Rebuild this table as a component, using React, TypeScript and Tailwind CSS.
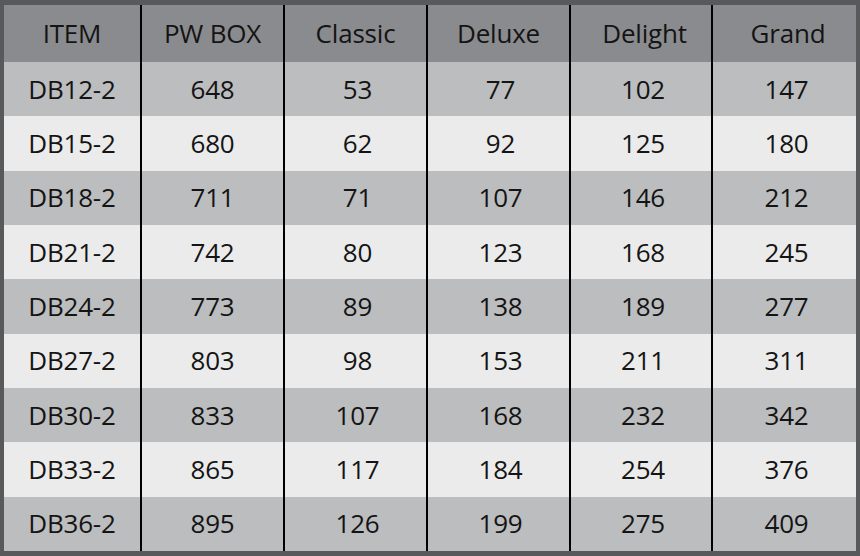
const headers = ["ITEM", "PW BOX", "Classic", "Deluxe", "Delight", "Grand"];

const rows = [
  ["DB12-2", "648", "53", "77", "102", "147"],
  ["DB15-2", "680", "62", "92", "125", "180"],
  ["DB18-2", "711", "71", "107", "146", "212"],
  ["DB21-2", "742", "80", "123", "168", "245"],
  ["DB24-2", "773", "89", "138", "189", "277"],
  ["DB27-2", "803", "98", "153", "211", "311"],
  ["DB30-2", "833", "107", "168", "232", "342"],
  ["DB33-2", "865", "117", "184", "254", "376"],
  ["DB36-2", "895", "126", "199", "275", "409"],
];

export default function App() {
  return (
    <div
      className="w-[860px] h-[556px] bg-[#58595b] pt-[5px] pb-[5px] px-[4px]"
      style={{ fontFamily: '"Open Sans", "Noto Sans", sans-serif' }}
    >
      <div className="grid h-full grid-cols-[136px_143px_143px_143px_142px_1fr] grid-rows-[57px_repeat(9,1fr)] text-[26px] tracking-[-0.2px] text-[#141414]">
        {headers.map((h, i) => (
          <div
            key={h}
            className={`flex items-center justify-center bg-[#8a8b8e] ${i > 0 ? "border-l-2 border-black" : ""} ${i > 3 ? "pl-[7px]" : ""}`}
          >
            {h}
          </div>
        ))}
        {rows.map((row, r) =>
          row.map((cell, i) => (
            <div
              key={`${r}-${i}`}
              className={`flex items-center justify-center ${r % 2 === 0 ? "bg-[#bcbdbf]" : "bg-[#ebebeb]"} ${i > 0 ? "border-l-2 border-black" : ""} ${i > 1 ? "pl-[4px]" : ""}`}
            >
              {cell}
            </div>
          ))
        )}
      </div>
    </div>
  );
}
